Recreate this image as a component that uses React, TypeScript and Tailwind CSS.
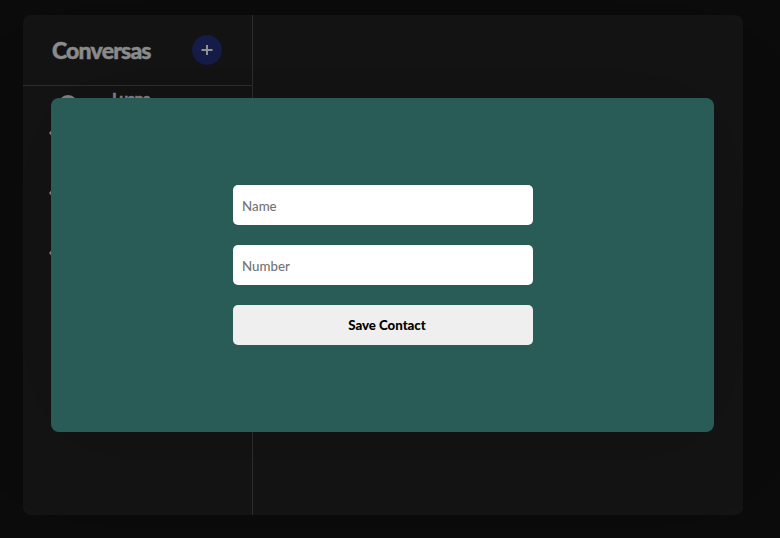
import React from "react";

const contacts = ["Luana", "", ""];

function Sidebar() {
  return (
    <aside className="flex w-[230px] flex-col border-r border-[#2e2e2e]">
      <header className="flex h-[71px] shrink-0 items-center justify-between border-b border-[#2e2e2e] pr-[30px] pl-[29px]">
        <h1 className="text-[23px] leading-[30px] font-black tracking-[-0.8px] text-[#8e8e8e] [-webkit-text-stroke:0.5px_#8e8e8e]">Conversas</h1>
        <button aria-label="+" className="flex size-[30px] items-center justify-center rounded-full bg-[#151d49]">
          <svg width="12" height="12" viewBox="0 0 12 12" fill="none" stroke="#959595" strokeWidth="2">
            <path d="M0.5 6H11.5M6 1V11" />
          </svg>
        </button>
      </header>
      <ul className="flex flex-col">
        {contacts.map((name, i) => (
          <li key={i} className="flex h-[60px] items-start pl-[26px]">
            <svg width="38" height="60" viewBox="0 0 38 60" fill="#858585">
              {i === 0 && <circle cx="19" cy="19" r="10" />}
              <path d="M0 47l3-3.5h29v7H3z" />
            </svg>
            <span className="mt-px ml-[25px] text-[16px] leading-[24px] font-black tracking-[-0.9px] text-[#858585] [-webkit-text-stroke:0.4px_#858585]">{name}</span>
          </li>
        ))}
      </ul>
    </aside>
  );
}

function ContactModal() {
  const field =
    "h-10 w-[300px] rounded-[5px] bg-white px-[9.5px] pt-px text-[13.3px] font-medium text-black outline-none placeholder:text-[#757575]";
  return (
    <form className="flex h-[334px] w-[663px] flex-col items-center justify-center gap-5 rounded-[8px] bg-[#2a5c57] shadow-[0_0_100px_rgba(0,0,0,0.18)]">
      <input className={field} placeholder="Name" />
      <input className={field} placeholder="Number" />
      <button type="button" className="h-10 w-[300px] rounded-[5px] bg-[#efefef] pt-px pl-[9px] text-[13.3px] font-black tracking-[-0.05px] text-black">
        Save Contact
      </button>
    </form>
  );
}

export default function App() {
  return (
    <main className="grid h-[538px] w-[780px] overflow-hidden bg-[#0b0b0b] font-['Lato','Liberation_Sans',sans-serif]">
      <section className="col-start-1 row-start-1 mt-[15px] ml-[23px] flex h-[500px] w-[720px] overflow-hidden rounded-[8px] bg-[#141414]">
        <Sidebar />
      </section>
      <div className="z-10 col-start-1 row-start-1 mt-[98px] ml-[51px] h-[334px] w-[663px]">
        <ContactModal />
      </div>
    </main>
  );
}
